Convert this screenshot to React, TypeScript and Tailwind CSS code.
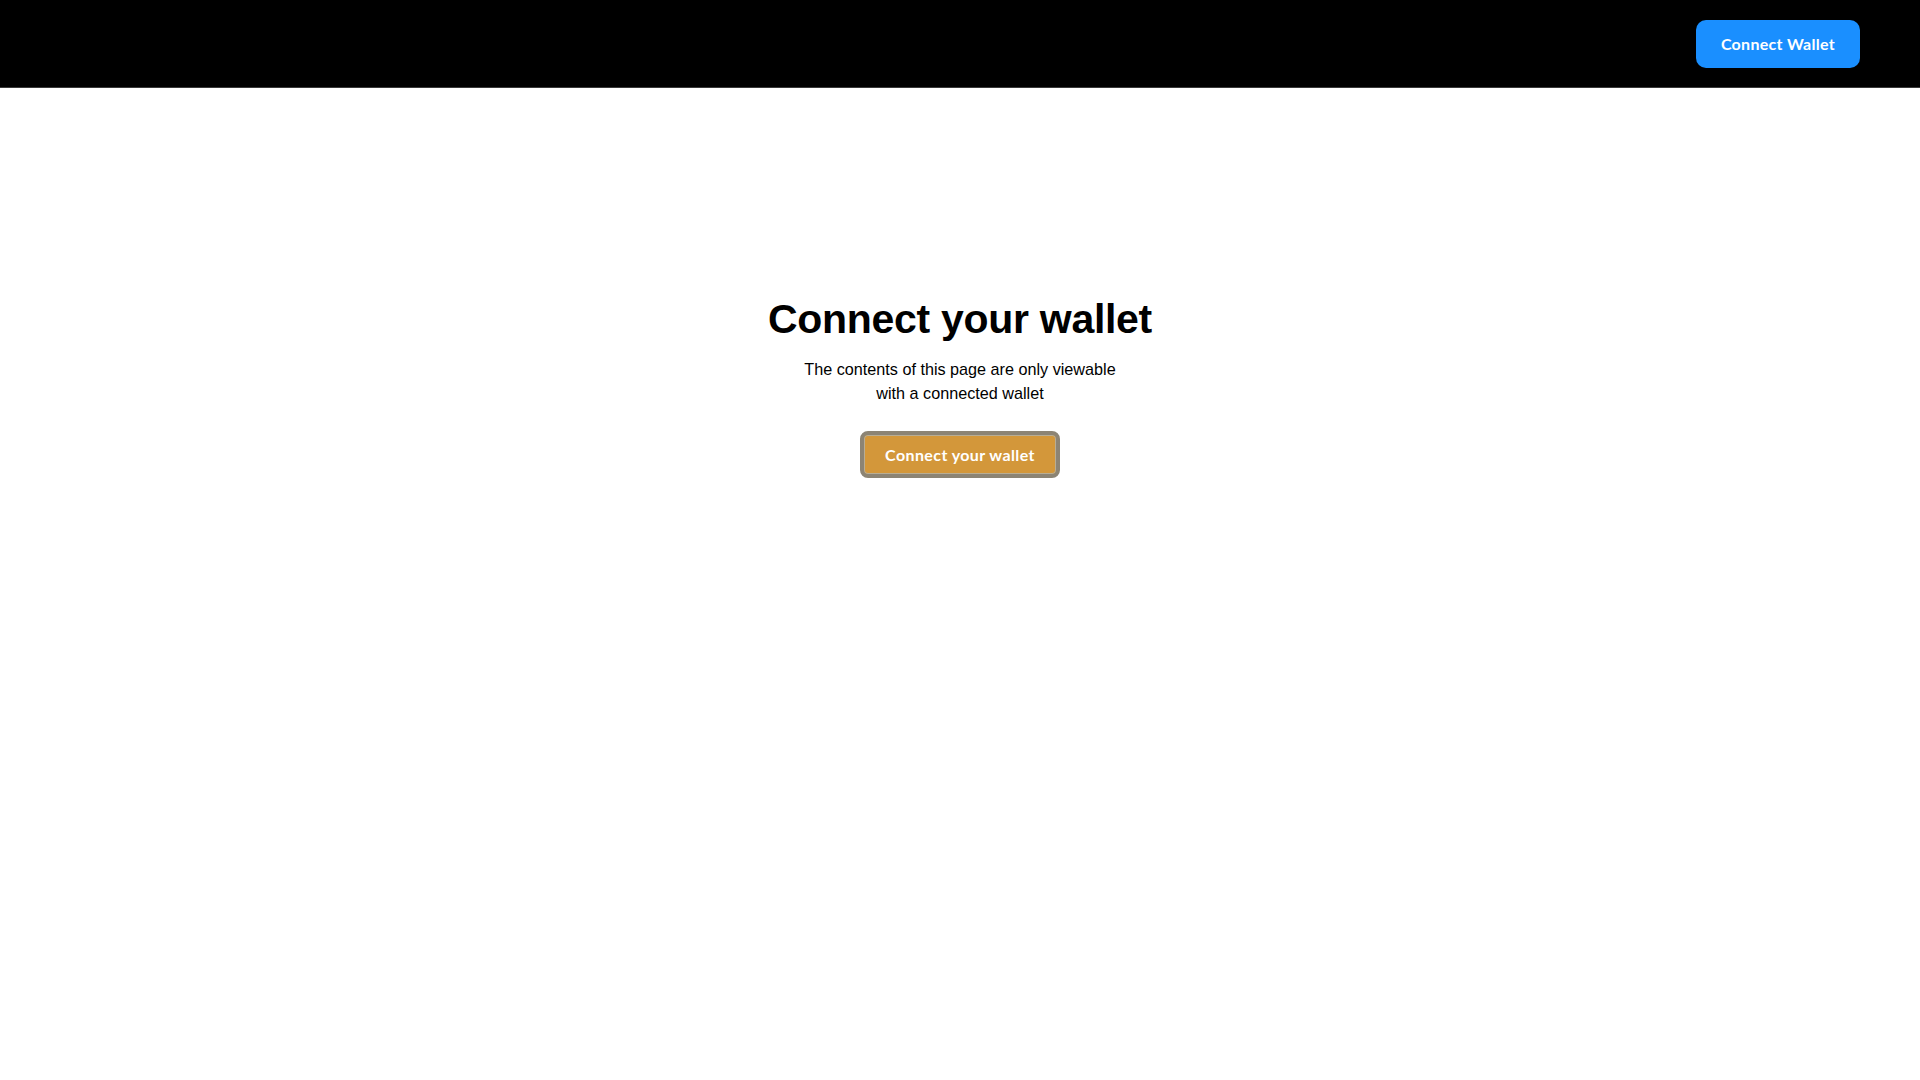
import React from 'react'

const App = () => {
  return (
    <div className="min-h-screen bg-white font-['Liberation_Sans',Arial,sans-serif]">
      <header className="h-[88px] bg-black border-b border-[#3a3a3a] flex items-center justify-end pr-[60px]">
        <button className="w-[164px] h-[48px] rounded-[10px] bg-[#1a8fff] text-white text-[16px] font-bold font-['Lato',sans-serif] tracking-[0.3px]">
          Connect Wallet
        </button>
      </header>

      <main className="flex flex-col items-center pt-[207px]">
        <h1 className="text-[41px] leading-[48px] font-bold text-black tracking-[-0.3px]">Connect your wallet</h1>
        <p className="mt-[14px] text-[16.2px] leading-[24px] text-black text-center">
          The contents of this page are only viewable
          <br />
          with a connected wallet
        </p>
        <button className="mt-[26px] w-[200px] h-[47px] rounded-[8px] border-[4px] border-[#8c8474] bg-[#d3973a] text-white text-[16px] font-bold font-['Lato',sans-serif] tracking-[0.4px] shadow-[inset_0_0_0_1px_#b8ad94]">
          Connect your wallet
        </button>
      </main>
    </div>
  )
}

export default App
